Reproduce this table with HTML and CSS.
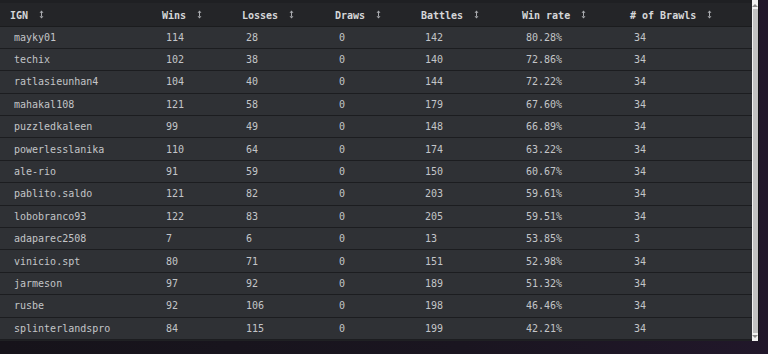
FILE: index.html
```html
<!DOCTYPE html>
<html>
<head>
<meta charset="utf-8">
<link rel="stylesheet" href="styles.css">
</head>
<body>
<div class="page">
  <div class="panel">
    <div class="table-wrap">
      <table class="stats">
        <colgroup>
          <col class="c-ign"><col class="c-wins"><col class="c-losses"><col class="c-draws"><col class="c-battles"><col class="c-rate"><col class="c-brawls">
        </colgroup>
        <thead>
          <tr>
            <th><span class="h">IGN</span><svg class="sort" viewBox="0 0 5 9"><path d="M2.5 0.5 L4.5 2.8 H0.5 Z M2 2.5 H3 V6.5 H2 Z M2.5 8.5 L4.5 6.2 H0.5 Z"/></svg></th>
            <th><span class="h">Wins</span><svg class="sort" viewBox="0 0 5 9"><path d="M2.5 0.5 L4.5 2.8 H0.5 Z M2 2.5 H3 V6.5 H2 Z M2.5 8.5 L4.5 6.2 H0.5 Z"/></svg></th>
            <th><span class="h">Losses</span><svg class="sort" viewBox="0 0 5 9"><path d="M2.5 0.5 L4.5 2.8 H0.5 Z M2 2.5 H3 V6.5 H2 Z M2.5 8.5 L4.5 6.2 H0.5 Z"/></svg></th>
            <th><span class="h">Draws</span><svg class="sort" viewBox="0 0 5 9"><path d="M2.5 0.5 L4.5 2.8 H0.5 Z M2 2.5 H3 V6.5 H2 Z M2.5 8.5 L4.5 6.2 H0.5 Z"/></svg></th>
            <th><span class="h">Battles</span><svg class="sort" viewBox="0 0 5 9"><path d="M2.5 0.5 L4.5 2.8 H0.5 Z M2 2.5 H3 V6.5 H2 Z M2.5 8.5 L4.5 6.2 H0.5 Z"/></svg></th>
            <th><span class="h">Win rate</span><svg class="sort" viewBox="0 0 5 9"><path d="M2.5 0.5 L4.5 2.8 H0.5 Z M2 2.5 H3 V6.5 H2 Z M2.5 8.5 L4.5 6.2 H0.5 Z"/></svg></th>
            <th><span class="h"># of Brawls</span><svg class="sort" viewBox="0 0 5 9"><path d="M2.5 0.5 L4.5 2.8 H0.5 Z M2 2.5 H3 V6.5 H2 Z M2.5 8.5 L4.5 6.2 H0.5 Z"/></svg></th>
          </tr>
        </thead>
        <tbody>
          <tr><td>mayky01</td><td>114</td><td>28</td><td>0</td><td>142</td><td>80.28%</td><td>34</td></tr>
          <tr><td>techix</td><td>102</td><td>38</td><td>0</td><td>140</td><td>72.86%</td><td>34</td></tr>
          <tr><td>ratlasieunhan4</td><td>104</td><td>40</td><td>0</td><td>144</td><td>72.22%</td><td>34</td></tr>
          <tr><td>mahakal108</td><td>121</td><td>58</td><td>0</td><td>179</td><td>67.60%</td><td>34</td></tr>
          <tr><td>puzzledkaleen</td><td>99</td><td>49</td><td>0</td><td>148</td><td>66.89%</td><td>34</td></tr>
          <tr><td>powerlesslanika</td><td>110</td><td>64</td><td>0</td><td>174</td><td>63.22%</td><td>34</td></tr>
          <tr><td>ale-rio</td><td>91</td><td>59</td><td>0</td><td>150</td><td>60.67%</td><td>34</td></tr>
          <tr><td>pablito.saldo</td><td>121</td><td>82</td><td>0</td><td>203</td><td>59.61%</td><td>34</td></tr>
          <tr><td>lobobranco93</td><td>122</td><td>83</td><td>0</td><td>205</td><td>59.51%</td><td>34</td></tr>
          <tr><td>adaparec2508</td><td>7</td><td>6</td><td>0</td><td>13</td><td>53.85%</td><td>3</td></tr>
          <tr><td>vinicio.spt</td><td>80</td><td>71</td><td>0</td><td>151</td><td>52.98%</td><td>34</td></tr>
          <tr><td>jarmeson</td><td>97</td><td>92</td><td>0</td><td>189</td><td>51.32%</td><td>34</td></tr>
          <tr><td>rusbe</td><td>92</td><td>106</td><td>0</td><td>198</td><td>46.46%</td><td>34</td></tr>
          <tr><td>splinterlandspro</td><td>84</td><td>115</td><td>0</td><td>199</td><td>42.21%</td><td>34</td></tr>
        </tbody>
      </table>
    </div>
    <div class="scrollbar">
      <div class="arrow up"></div>
      <div class="thumb"></div>
      <div class="arrow down"></div>
    </div>
  </div>
</div>
</body>
</html>
```
FILE: styles.css
```css
* { box-sizing: border-box; }
html, body { margin: 0; padding: 0; }
body {
  width: 768px;
  height: 354px;
  overflow: hidden;
  background: linear-gradient(90deg, #16131a 0%, #1a1520 60%, #21172a 100%);
  font-family: "DejaVu Sans Mono", "Liberation Mono", monospace;
}
.page { display: flex; }
.panel {
  display: flex;
  width: 759px;
  height: 341px;
  background: #1f2023;
  border-right: 1px solid #151517;
}
.table-wrap {
  width: 752px;
  padding-top: 3px;
}
.stats {
  width: 752px;
  border-collapse: collapse;
  table-layout: fixed;
}
.c-ign { width: 152px; }
.c-wins { width: 80px; }
.c-losses { width: 93px; }
.c-draws { width: 86px; }
.c-battles { width: 101px; }
.c-rate { width: 108px; }
.c-brawls { width: 132px; }
thead tr {
  background: #242528;
  height: 23px;
  border-bottom: 1px solid #1b1c1e;
}
th {
  text-align: left;
  padding: 0 0 0 10px;
  font-size: 10px;
  font-weight: bold;
  color: #d6d7d9;
  white-space: nowrap;
  vertical-align: middle;
}
.h { vertical-align: middle; }
.sort {
  width: 5px;
  height: 9px;
  margin-left: 11px;
  vertical-align: middle;
  fill: #a9abaf;
}
tbody tr {
  background: #2f3135;
  height: 22.4px;
  border-bottom: 1px solid #1c1d20;
}
td {
  padding: 0 0 0 14px;
  font-size: 10px;
  color: #c3c5c8;
  white-space: nowrap;
  vertical-align: middle;
}
.scrollbar {
  width: 7px;
  background: #f1f1f1;
  display: flex;
  flex-direction: column;
  align-items: center;
  padding: 4px 0 3px;
  gap: 2px;
}
.thumb {
  flex: 1;
  width: 5px;
  background: #c2c2c2;
}
.arrow {
  width: 0;
  height: 0;
  border-left: 3px solid transparent;
  border-right: 3px solid transparent;
}
.arrow.up { border-bottom: 3px solid #8a8a8a; }
.arrow.down { border-top: 3px solid #8a8a8a; }
```
